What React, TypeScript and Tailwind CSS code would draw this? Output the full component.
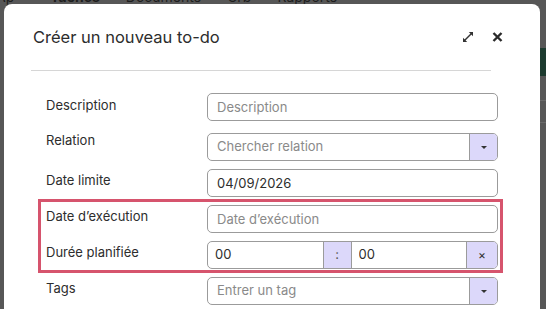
import React from 'react';

const font = { fontFamily: 'Inter, "Noto Sans", sans-serif' };

const Caret = () => (
  <svg width="8" height="5" viewBox="0 0 8 5" className="text-[#333]">
    <path d="M1 1h6L4 4z" fill="currentColor" />
  </svg>
);

const Label: React.FC<{ text: string; className?: string }> = ({ text, className }) => (
  <div className={`w-[161px] shrink-0 text-[13px] leading-[18px] text-[#2d2d2d] ${className ?? ''}`}>{text}</div>
);

const inputCls =
  'h-[28px] w-[291px] rounded-[5px] border border-[#9b9b9b] bg-white px-[9px] text-[13px] text-[#2d2d2d] placeholder:text-[#8a8a8a] outline-none';

const SelectBox: React.FC<{ placeholder: string }> = ({ placeholder }) => (
  <div className="flex h-[28px] w-[291px] overflow-hidden rounded-[5px] border border-[#9b9b9b] bg-white">
    <input className="min-w-0 flex-1 px-[9px] text-[13px] text-[#2d2d2d] placeholder:text-[#8a8a8a] outline-none" placeholder={placeholder} />
    <div className="flex w-[28px] items-center justify-center border-l border-[#9b9b9b] bg-[#dcd8fa]">
      <Caret />
    </div>
  </div>
);

const App: React.FC = () => {
  return (
    <div className="relative h-[309px] w-[546px] overflow-hidden bg-[#575757]" style={font}>
      {/* page behind the dialog */}
      <div className="flex gap-[26px] -mt-[12px] text-[14px] leading-[18px] text-[#1e1e1e]">
        <span className="-ml-[4px]">Ap</span>
        <span className="ml-[10px] font-bold">Taches</span>
        <span>Documents</span>
        <span>Crb</span>
        <span>Rapports</span>
      </div>
      <div className="absolute right-0 top-[48px] h-[28px] w-[8px] bg-[#1d3b2f]" />
      <div className="absolute right-0 top-[100px] h-px w-[8px] bg-[#6a6a6a]" />
      <div className="absolute right-0 top-[122px] h-px w-[8px] bg-[#6a6a6a]" />

      {/* dialog */}
      <div className="absolute left-[4px] top-[4px] h-[340px] w-[536px] rounded-[8px] bg-white">
        <div className="flex items-center pl-[29px] pr-[37px] pt-[21px]">
          <h2 className="flex-1 text-[16.5px] leading-[24px] text-[#2d2d2d]">Créer un nouveau to-do</h2>
          <svg width="12" height="12" viewBox="0 0 12 12" className="mr-[18px] text-[#333]">
            <path d="M2.5 9.5L9.5 2.5" stroke="currentColor" strokeWidth="1.4" />
            <path d="M11 1v4.2L6.8 1z" fill="currentColor" />
            <path d="M1 11V6.8L5.2 11z" fill="currentColor" />
          </svg>
          <svg width="11" height="10" viewBox="0 0 11 10" className="text-[#2a2a2a]">
            <path d="M1.5 1l8 8M9.5 1l-8 8" stroke="currentColor" strokeWidth="2.4" />
          </svg>
        </div>
        <div className="ml-[27px] mt-[21px] h-px w-[460px] bg-[#d6d6d6]" />

        <div className="mt-[22px] flex flex-col">
          <div className="ml-[42px] flex items-start">
            <Label text="Description" className="pt-[3px]" />
            <input className={inputCls} placeholder="Description" />
          </div>
          <div className="ml-[42px] mt-[12px] flex items-start">
            <Label text="Relation" className="-mt-[2px]" />
            <SelectBox placeholder="Chercher relation" />
          </div>
          <div className="ml-[42px] mt-[8px] flex items-start">
            <Label text="Date limite" className="pt-[2px]" />
            <input className={inputCls} defaultValue="04/09/2026" />
          </div>

          <div className="ml-[34px] mt-[2px] w-[465px] border-[3px] border-[#d6546d] pb-px pl-[5px] pt-[3px]">
            <div className="flex items-start">
              <Label text="Date d’exécution" className="pt-[2px]" />
              <input className={inputCls} placeholder="Date d’exécution" />
            </div>
            <div className="mt-[8px] flex items-start">
              <Label text="Durée planifiée" className="pt-[2px]" />
              <div className="flex h-[28px] w-[291px] overflow-hidden rounded-[5px] border border-[#9b9b9b] bg-white text-[13px] text-[#2d2d2d]">
                <input className="min-w-0 flex-1 px-[7px] outline-none" defaultValue="00" />
                <div className="flex w-[29px] items-center justify-center border-x border-[#9b9b9b] bg-[#dcd8fa] text-[#555]">:</div>
                <input className="min-w-0 flex-1 px-[7px] outline-none" defaultValue="00" />
                <div className="flex w-[31px] items-center justify-center border-l border-[#9b9b9b] bg-[#dcd8fa] text-[12px] text-[#333]">×</div>
              </div>
            </div>
          </div>

          <div className="ml-[42px] mt-[4px] flex items-start">
            <Label text="Tags" className="pt-[2px]" />
            <SelectBox placeholder="Entrer un tag" />
          </div>
        </div>
      </div>
    </div>
  );
};

export default App;
